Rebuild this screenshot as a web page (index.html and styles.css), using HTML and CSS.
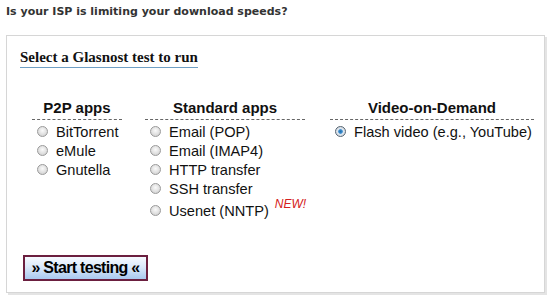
FILE: index.html
```html
<!DOCTYPE html>
<html>
<head>
<meta charset="utf-8">
<link rel="stylesheet" href="styles.css">
</head>
<body>
<h1 class="title">Is your ISP is limiting your download speeds?</h1>
<form class="panel">
  <h2 class="panel-title">Select a Glasnost test to run</h2>
  <div class="columns">
    <div class="col col-p2p">
      <div class="col-head">P2P apps</div>
      <label class="opt"><input type="radio" name="t"><span>BitTorrent</span></label>
      <label class="opt"><input type="radio" name="t"><span>eMule</span></label>
      <label class="opt"><input type="radio" name="t"><span>Gnutella</span></label>
    </div>
    <div class="col col-std">
      <div class="col-head">Standard apps</div>
      <label class="opt"><input type="radio" name="t"><span>Email (POP)</span></label>
      <label class="opt"><input type="radio" name="t"><span>Email (IMAP4)</span></label>
      <label class="opt"><input type="radio" name="t"><span>HTTP transfer</span></label>
      <label class="opt"><input type="radio" name="t"><span>SSH transfer</span></label>
      <label class="opt opt-new"><input type="radio" name="t"><span>Usenet (NNTP)</span><sup class="new">NEW!</sup></label>
    </div>
    <div class="col col-vod">
      <div class="col-head">Video-on-Demand</div>
      <label class="opt"><input type="radio" name="t" checked><span>Flash video (e.g., YouTube)</span></label>
    </div>
  </div>
  <button type="button" class="start">» Start testing «</button>
</form>
</body>
</html>
```
FILE: styles.css
```css
html, body {
  margin: 0;
  padding: 0;
  background: #fff;
}
body {
  width: 560px;
  height: 302px;
  overflow: hidden;
}
.title {
  margin: 0;
  padding: 5px 0 0 6px;
  height: 29px;
  box-sizing: border-box;
  font-family: "DejaVu Sans", Verdana, sans-serif;
  font-weight: bold;
  font-size: 11px;
  line-height: 14px;
  color: #333;
}
.panel {
  margin: 6px 0 0 6px;
  width: 539px;
  height: 258px;
  box-sizing: border-box;
  border: 1px solid #d6d6d6;
  box-shadow: 2px 2px 0 #e4e4e4;
  padding: 13px 0 0 13px;
  display: flex;
  flex-direction: column;
  align-items: flex-start;
}
.panel-title {
  margin: 0;
  font-family: "Liberation Serif", "Times New Roman", serif;
  font-weight: bold;
  font-size: 15px;
  line-height: 17px;
  color: #111;
  border-bottom: 1px solid #6f9fc4;
  padding-bottom: 1px;
}
.columns {
  display: flex;
  margin: 31px 0 0 12px;
  font-family: "Liberation Sans", Arial, sans-serif;
  color: #111;
}
.col {
  display: flex;
  flex-direction: column;
}
.col-p2p { width: 90px; }
.col-std { width: 160px; margin-left: 23px; }
.col-vod { width: 204px; margin-left: 25px; }
.col-head {
  text-align: center;
  font-weight: bold;
  font-size: 15px;
  line-height: 17px;
  border-bottom: 1px dashed #666;
  padding-bottom: 3px;
  margin-bottom: 2px;
}
.opt {
  display: flex;
  align-items: center;
  height: 19px;
  font-size: 14.6px;
  padding-left: 5px;
  white-space: nowrap;
}
.opt-new {
  height: 21px;
  align-items: flex-end;
}
.opt input {
  appearance: none;
  -webkit-appearance: none;
  margin: 0 8px 0 0;
  width: 11px;
  height: 11px;
  border-radius: 50%;
  border: 1px solid #9a9a9a;
  background: radial-gradient(circle at 50% 40%, #fafafa 0%, #e0e0e0 55%, #c8c8c8 100%);
  box-sizing: border-box;
  flex: none;
}
.opt-new input { margin-bottom: 3px; }
.opt input:checked {
  border-color: #55636f;
  background: radial-gradient(circle, #1f6fb0 0%, #3f8fcf 30%, #dfe6ee 42%, #c9d2dc 100%);
}
.new {
  color: #d42020;
  font-style: italic;
  font-size: 12px;
  margin-left: 6px;
  align-self: flex-start;
  line-height: 12px;
}
.start {
  margin: auto 0 11px 3px;
  width: 125px;
  height: 26px;
  border: 2px solid #6b1f3f;
  background: linear-gradient(#f6faff, #dbe9fa 45%, #a9c9ef);
  font-family: "Liberation Sans", Arial, sans-serif;
  font-weight: bold;
  font-size: 16px;
  color: #000;
  padding: 0;
  letter-spacing: -0.7px;
  cursor: pointer;
}
```
